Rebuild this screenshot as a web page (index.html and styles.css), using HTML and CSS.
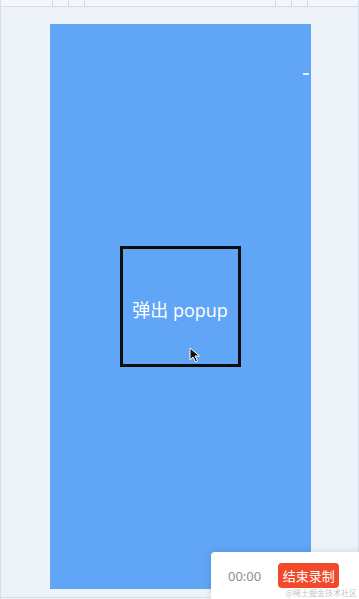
FILE: index.html
```html
<!DOCTYPE html>
<html lang="zh">
<head>
<meta charset="utf-8">
<link rel="stylesheet" href="styles.css">
</head>
<body>
<div class="frame">
  <div class="ruler">
    <span class="tick t1"></span><span class="tick t2"></span><span class="tick t3"></span>
    <span class="spacer"></span>
    <span class="tick t4"></span><span class="tick t5"></span><span class="tick t6"></span>
  </div>
  <div class="stage">
    <div class="screen">
      <span class="dash"></span>
      <div class="trigger">
        <span class="label">弹出 popup</span>
        <svg class="cursor" width="12" height="16" viewBox="0 0 12 16">
          <path d="M1 1 L1 13 L4 10 L6.5 15 L8.5 14 L6 9 L10.5 9 Z" fill="#111" stroke="#fff" stroke-width="1"/>
        </svg>
      </div>
    </div>
  </div>
  <div class="bottomline"></div>
</div>
<div class="recorder">
  <span class="time">00:00</span>
  <button class="stop">结束录制</button>
</div>
<div class="watermark">@稀土掘金技术社区</div>
</body>
</html>
```
FILE: styles.css
```css
html, body {
  margin: 0;
  padding: 0;
  width: 359px;
  height: 599px;
  overflow: hidden;
  background: #eef2f9;
  font-family: "Noto Sans CJK SC", "Noto Sans", sans-serif;
}
.frame {
  position: relative;
  height: 599px;
  border-left: 1px solid #d9dfe9;
  border-right: 1px solid #d9dfe9;
  box-sizing: border-box;
  display: flex;
  flex-direction: column;
}
.ruler {
  height: 6px;
  border-bottom: 1px solid #d6dce6;
  display: flex;
  background: #f3f6fb;
}
.tick {
  width: 0;
  border-left: 1px solid #d3d9e3;
  height: 6px;
}
.t1 { margin-left: 51px; }
.t2 { margin-left: 15px; }
.t3 { margin-left: 15px; }
.spacer { flex: 1; }
.t4 { margin-right: 15px; }
.t5 { margin-right: 15px; }
.t6 { margin-right: 50px; }
.stage {
  flex: 1;
  padding: 17px 0 0 49px;
}
.screen {
  position: relative;
  width: 261px;
  height: 565px;
  background: #61a5f6;
  display: flex;
  justify-content: center;
  padding-top: 222px;
  box-sizing: border-box;
}
.dash {
  position: absolute;
  right: 2px;
  top: 49px;
  width: 6px;
  height: 2px;
  background: #e8f0fd;
}
.trigger {
  position: relative;
  width: 121px;
  height: 121px;
  margin-left: -1px;
  border: 3px solid #0d0d0d;
  box-sizing: border-box;
  display: flex;
  align-items: center;
  justify-content: center;
}
.label {
  color: #ffffff;
  font-family: "Open Sans", "Noto Sans CJK SC", sans-serif;
  font-size: 18px;
  letter-spacing: 0;
  margin-top: 5px;
}
.cursor {
  position: absolute;
  left: 66px;
  top: 98px;
}
.bottomline {
  height: 1px;
  background: #d6dce6;
  margin-bottom: 1px;
}
.recorder {
  position: absolute;
  left: 211px;
  top: 552px;
  width: 150px;
  height: 47px;
  background: #ffffff;
  border-radius: 4px 0 0 0;
  box-shadow: 0 0 8px rgba(0, 0, 0, 0.12);
  display: flex;
  align-items: center;
  padding-left: 17px;
  box-sizing: border-box;
  gap: 17px;
}
.time {
  font-family: "Noto Sans", sans-serif;
  font-size: 13px;
  color: #8a8f99;
}
.stop {
  background: #f04a2b;
  color: #fff;
  border: none;
  border-radius: 4px;
  width: 61px;
  height: 25px;
  font-family: "Noto Sans CJK SC", sans-serif;
  font-size: 13px;
  padding: 0;
  margin-top: 0;
}
.watermark {
  position: absolute;
  right: 2px;
  top: 587px;
  font-size: 8px;
  color: rgba(150, 150, 155, 0.6);
  font-family: "Noto Sans CJK SC", sans-serif;
}
```
